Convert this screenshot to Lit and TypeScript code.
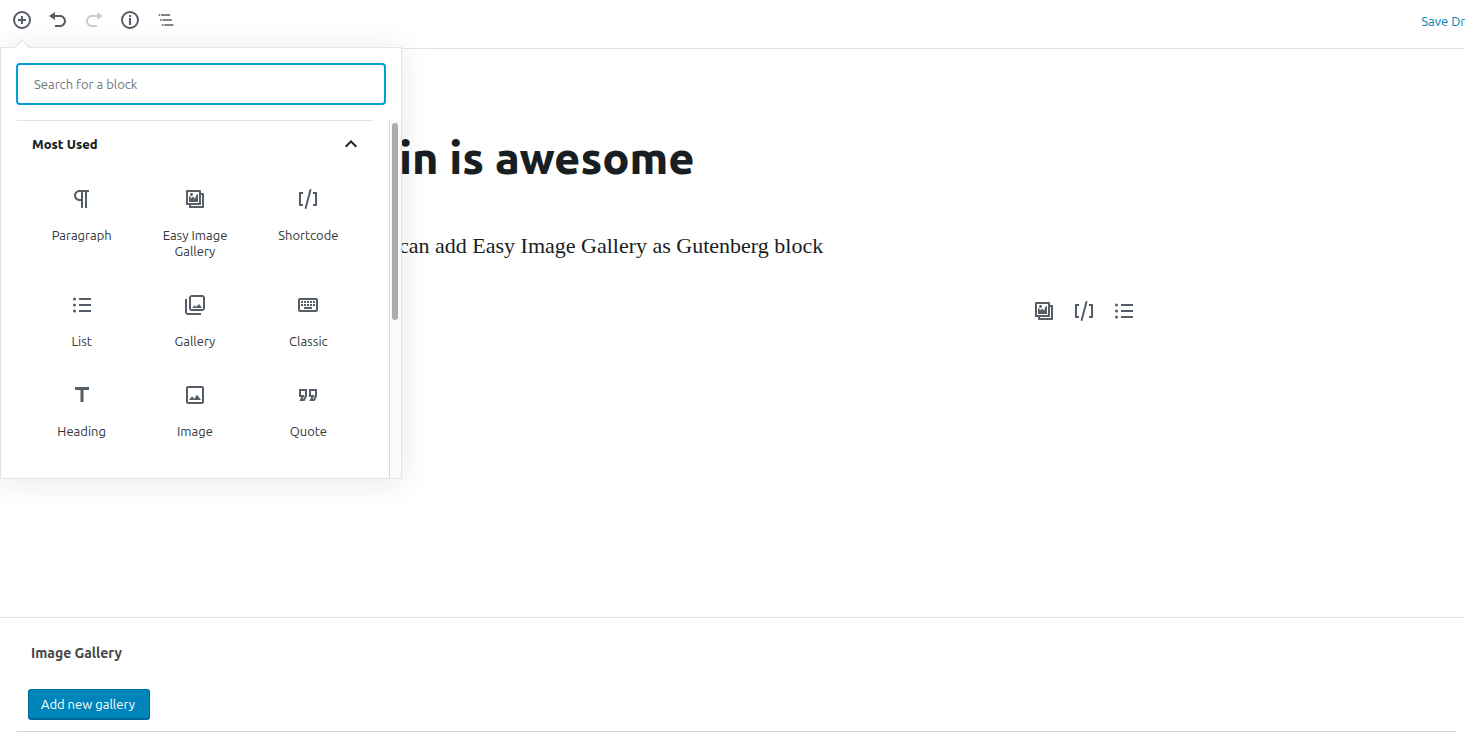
import { LitElement, html, css, svg } from "lit";
import { customElement, state } from "lit/decorators.js";
import { classMap } from "lit/directives/class-map.js";

const circle = svg`<path d="M10 1a9 9 0 1 0 0 18 9 9 0 0 0 0-18zm0 16a7 7 0 1 1 0-14 7 7 0 0 1 0 14z"/>`;

const icons: Record<string, { size: number; box: number; body: unknown }> = {
  insert: { size: 20, box: 20, body: svg`${circle}<path d="M11 6H9v3H6v2h3v3h2v-3h3V9h-3z"/>` },
  undo: { size: 20, box: 20, body: svg`<path d="M12 5H7V2L1 6l6 4V7h5c2.2 0 4 1.8 4 4s-1.8 4-4 4H7v2h5c3.3 0 6-2.7 6-6s-2.7-6-6-6z"/>` },
  redo: { size: 20, box: 20, body: svg`<path d="M8 5h5V2l6 4-6 4V7H8c-2.2 0-4 1.8-4 4s1.8 4 4 4h5v2H8c-3.3 0-6-2.7-6-6s2.7-6 6-6z"/>` },
  info: { size: 20, box: 20, body: svg`${circle}<path d="M9 5h2v2H9zM9 8h2v7H9z"/>` },
  outline: { size: 20, box: 24, body: svg`<path d="M5 5H3v2h2V5zm3 8h11v-2H8v2zm9-8H6v2h11V5zM7 11H5v2h2v-2zm0 8h2v-2H7v2zm3-2v2h11v-2H10z"/>` },
  chevron: { size: 24, box: 24, body: svg`<path d="M12 8l-6 6 1.41 1.41L12 10.83l4.59 4.58L18 14z"/>` },
  paragraph: { size: 24, box: 24, body: svg`<path d="M11 5v7H9.5C7.6 12 6 10.4 6 8.5S7.6 5 9.5 5H11m8-2H9.5C6.5 3 4 5.5 4 8.5S6.5 14 9.5 14H11v7h2V5h2v16h2V5h2V3z"/>` },
  easy: { size: 20, box: 20, body: svg`<path d="M16 4h1.96c.57 0 1.04.47 1.04 1.04v12.92c0 .57-.47 1.04-1.04 1.04H5.04C4.47 19 4 18.53 4 17.96V16H2.04C1.47 16 1 15.53 1 14.96V2.04C1 1.47 1.47 1 2.04 1h12.92c.57 0 1.04.47 1.04 1.04V4zM3 14h11V3H3v11zm5-8.5C8 4.67 7.33 4 6.5 4S5 4.67 5 5.5 5.67 7 6.5 7 8 6.33 8 5.5zm2 4.5s1-5 3-5v8H4V7c2 0 2 3 2 3s.33-2 2-2 2 2 2 2zm7 7V6h-1v8.96c0 .57-.47 1.04-1.04 1.04H6v1h11z"/>` },
  shortcode: { size: 24, box: 24, body: svg`<path d="M8.5 21.4l1.9.5 5.2-19.3-1.9-.5L8.5 21.4zM3 19h4v-2H5V7h2V5H3v14zM17 5v2h2v10h-2v2h4V5h-4z"/>` },
  list: { size: 24, box: 24, body: svg`<path d="M9 19h12v-2H9v2zm0-6h12v-2H9v2zm0-8v2h12V5H9z"/><circle cx="4.5" cy="6" r="1.5"/><circle cx="4.5" cy="12" r="1.5"/><circle cx="4.5" cy="18" r="1.5"/>` },
  gallery: { size: 24, box: 24, body: svg`<path d="M20 4v12H8V4h12m0-2H8L6 4v12l2 2h12l2-2V4l-2-2z"/><path d="M12 12l1 2 3-3 3 4H9z"/><path d="M2 6v14l2 2h14v-2H4V6H2z"/>` },
  classic: { size: 24, box: 24, body: svg`<path d="M20 7v10H4V7h16m0-2H4c-1.1 0-2 .9-2 2v10c0 1.1.9 2 2 2h16c1.1 0 2-.9 2-2V7c0-1.1-.9-2-2-2zm-9 3h2v2h-2V8zm0 3h2v2h-2v-2zM8 8h2v2H8V8zm0 3h2v2H8v-2zm-3 0h2v2H5v-2zm0-3h2v2H5V8zm3 6h8v2H8v-2zm6-3h2v2h-2v-2zm0-3h2v2h-2V8zm3 3h2v2h-2v-2zm0-3h2v2h-2V8z"/>` },
  heading: { size: 24, box: 24, body: svg`<path d="M5 4v3h5.5v12h3V7H19V4z"/>` },
  image: { size: 24, box: 24, body: svg`<path d="M19 5v14H5V5h14m0-2H5c-1.1 0-2 .9-2 2v14c0 1.1.9 2 2 2h14c1.1 0 2-.9 2-2V5c0-1.1-.9-2-2-2zm-4.86 8.86l-3 3.87L9 13.14 6 17h12l-3.86-5.14z"/>` },
  quote: { size: 24, box: 24, body: svg`<path d="M18.62 18h-5.24l2-4H13V6h8v7.24L18.62 18zm-2-2h.76L19 12.76V8h-4v4h3.62l-2 4zm-8 2H3.38l2-4H3V6h8v7.24L8.62 18zm-2-2h.76L9 12.76V8H5v4h3.62l-2 4z"/>` },
};

const icon = (name: string) => {
  const i = icons[name];
  return html`<svg width=${i.size} height=${i.size} viewBox="0 0 ${i.box} ${i.box}" fill="currentColor" aria-hidden="true">${i.body}</svg>`;
};

const reset = css`
  * { box-sizing: border-box; }
  button {
    margin: 0;
    padding: 0;
    border: 0;
    background: none;
    color: inherit;
    font: inherit;
    cursor: pointer;
  }
  svg { display: block; flex: none; }
`;

@customElement("block-inserter")
class BlockInserter extends LitElement {
  @state() private open = true;

  static styles = [reset, css`
    :host {
      display: flex;
      flex-direction: column;
      height: 432px;
      border: 1px solid #e2e4e7;
      background: #fff;
      box-shadow: 0 3px 30px rgba(25, 30, 35, 0.1);
      color: #32373c;
    }
    :host::before {
      content: "";
      position: absolute;
      top: -6px;
      left: 15px;
      width: 11px;
      height: 11px;
      border: solid #e2e4e7;
      border-width: 1px 0 0 1px;
      background: linear-gradient(135deg, #fff 52%, transparent 52%);
      transform: rotate(45deg);
    }
    .search { display: flex; padding: 15px; }
    .search input {
      flex: 1;
      min-width: 0;
      height: 42px;
      padding: 0 16px;
      border: 2px solid #00a0d2;
      border-radius: 4px;
      outline: 0;
      background: #fff;
      font: inherit;
      color: #32373c;
    }
    .search input::placeholder { color: #72777c; opacity: 1; }
    .results { flex: 1; min-height: 0; display: flex; }
    .panel { flex: 1; margin: 0 16px; overflow: hidden; border-top: 1px solid #e2e4e7; }
    h2 { margin: 0 0 2px; font-size: 13px; line-height: 16px; }
    .toggle {
      display: flex;
      align-items: center;
      justify-content: space-between;
      width: 100%;
      height: 46px;
      padding: 0 10px 0 15px;
      font-weight: 800;
      color: #191e23;
    }
    ul {
      display: grid;
      grid-template-columns: repeat(3, 1fr);
      margin: 0;
      padding: 0 8px;
      list-style: none;
    }
    .item {
      display: flex;
      flex-direction: column;
      align-items: center;
      width: 100%;
      padding: 8px 8px 16px;
      line-height: 16px;
    }
    .glyph {
      display: grid;
      place-items: center;
      height: 44px;
      margin-bottom: 6px;
      color: #555d66;
    }
    .track {
      width: 12px;
      padding: 3px 3px 0 2px;
      border-left: 1px solid #d8d8d8;
      background: #fafafa;
    }
    .thumb { height: 197px; border-radius: 3px; background: #acacac; }
  `];

  private blocks = [
    ["paragraph", "Paragraph"],
    ["easy", "Easy Image Gallery"],
    ["shortcode", "Shortcode"],
    ["list", "List"],
    ["gallery", "Gallery"],
    ["classic", "Classic"],
    ["heading", "Heading"],
    ["image", "Image"],
    ["quote", "Quote"],
  ];

  render() {
    return html`
      <div class="search">
        <input type="text" aria-label="Search for a block" placeholder="Search for a block" />
      </div>
      <div class="results">
        <div class="panel">
          <h2>
            <button class="toggle" aria-expanded=${this.open} @click=${() => (this.open = !this.open)}>
              Most Used ${icon("chevron")}
            </button>
          </h2>
          ${this.open
            ? html`<ul>
                ${this.blocks.map(([name, label]) => html`
                  <li><button class="item"><span class="glyph">${icon(name)}</span><span>${label}</span></button></li>`)}
              </ul>`
            : ""}
        </div>
        <div class="track"><div class="thumb"></div></div>
      </div>
    `;
  }
}

@customElement("app-root")
class AppRoot extends LitElement {
  static styles = [reset, css`
    :host {
      position: relative;
      display: flex;
      flex-direction: column;
      min-height: 100vh;
      overflow: hidden;
      background: #fff;
      font: 13px/16px Ubuntu, "Open Sans", sans-serif;
      color: #32373c;
    }
    header {
      display: flex;
      align-items: center;
      justify-content: space-between;
      height: 49px;
      padding: 0 0 8px 4px;
      border-bottom: 1px solid #e2e4e7;
      color: #555d66;
    }
    .tools { display: flex; }
    .tool { display: grid; place-items: center; width: 36px; height: 36px; }
    .faded { opacity: 0.3; }
    .save {
      margin-right: -17px;
      padding-left: 8px;
      padding-top: 2px;
      color: #0085ba;
      text-decoration: none;
      white-space: nowrap;
    }
    .inserter { position: absolute; top: 47px; left: 0; width: 402px; }
    main { flex: 1; padding: 79px 321px 0 399px; }
    h1 { margin: 0; font-size: 45px; line-height: 60px; font-weight: 800; color: #191e23; }
    p {
      margin: 42px 0 0;
      font: 22px/32px "Liberation Serif", serif;
      color: #191e23;
    }
    .shortcuts { display: flex; justify-content: flex-end; margin-top: 29px; color: #555d66; }
    .shortcut { display: grid; place-items: center; width: 40px; height: 40px; }
    .meta { padding: 11px 8px 10px 16px; border-top: 1px solid #e2e4e7; }
    .box { padding: 16px 11px 12px; border: solid #fbfbfb; border-width: 0 1px; border-bottom: 1px solid #d8d8d8; }
    .box h2 { margin: 0 0 28px 3px; font-size: 14px; line-height: 16px; color: #444; }
    .box .add {
      display: block;
      height: 30px;
      padding: 0 14px 0 12px;
      border: 1px solid #006799;
      border-color: #0073aa #006799 #006799;
      border-radius: 3px;
      background: #0085ba;
      box-shadow: 0 1px 0 #006799;
      color: #fff;
    }
  `];

  render() {
    return html`
      <header>
        <div class="tools">
          ${[
            ["insert", "Add block"],
            ["undo", "Undo"],
            ["redo", "Redo"],
            ["info", "Content structure"],
            ["outline", "Block navigation"],
          ].map(([name, label]) => html`
            <button class=${classMap({ tool: true, faded: name === "redo" })} aria-label=${label}>${icon(name)}</button>`)}
        </div>
        <a class="save" href="#">Save Draft</a>
      </header>
      <main>
        <h1>in is awesome</h1>
        <p>can add Easy Image Gallery as Gutenberg block</p>
        <div class="shortcuts">
          ${[
            ["easy", "Add Easy Image Gallery"],
            ["shortcode", "Add Shortcode"],
            ["list", "Add List"],
          ].map(([name, label]) => html`<button class="shortcut" aria-label=${label}>${icon(name)}</button>`)}
        </div>
      </main>
      <section class="meta">
        <div class="box">
          <h2>Image Gallery</h2>
          <button class="add">Add new gallery</button>
        </div>
      </section>
      <block-inserter class="inserter"></block-inserter>
    `;
  }
}
